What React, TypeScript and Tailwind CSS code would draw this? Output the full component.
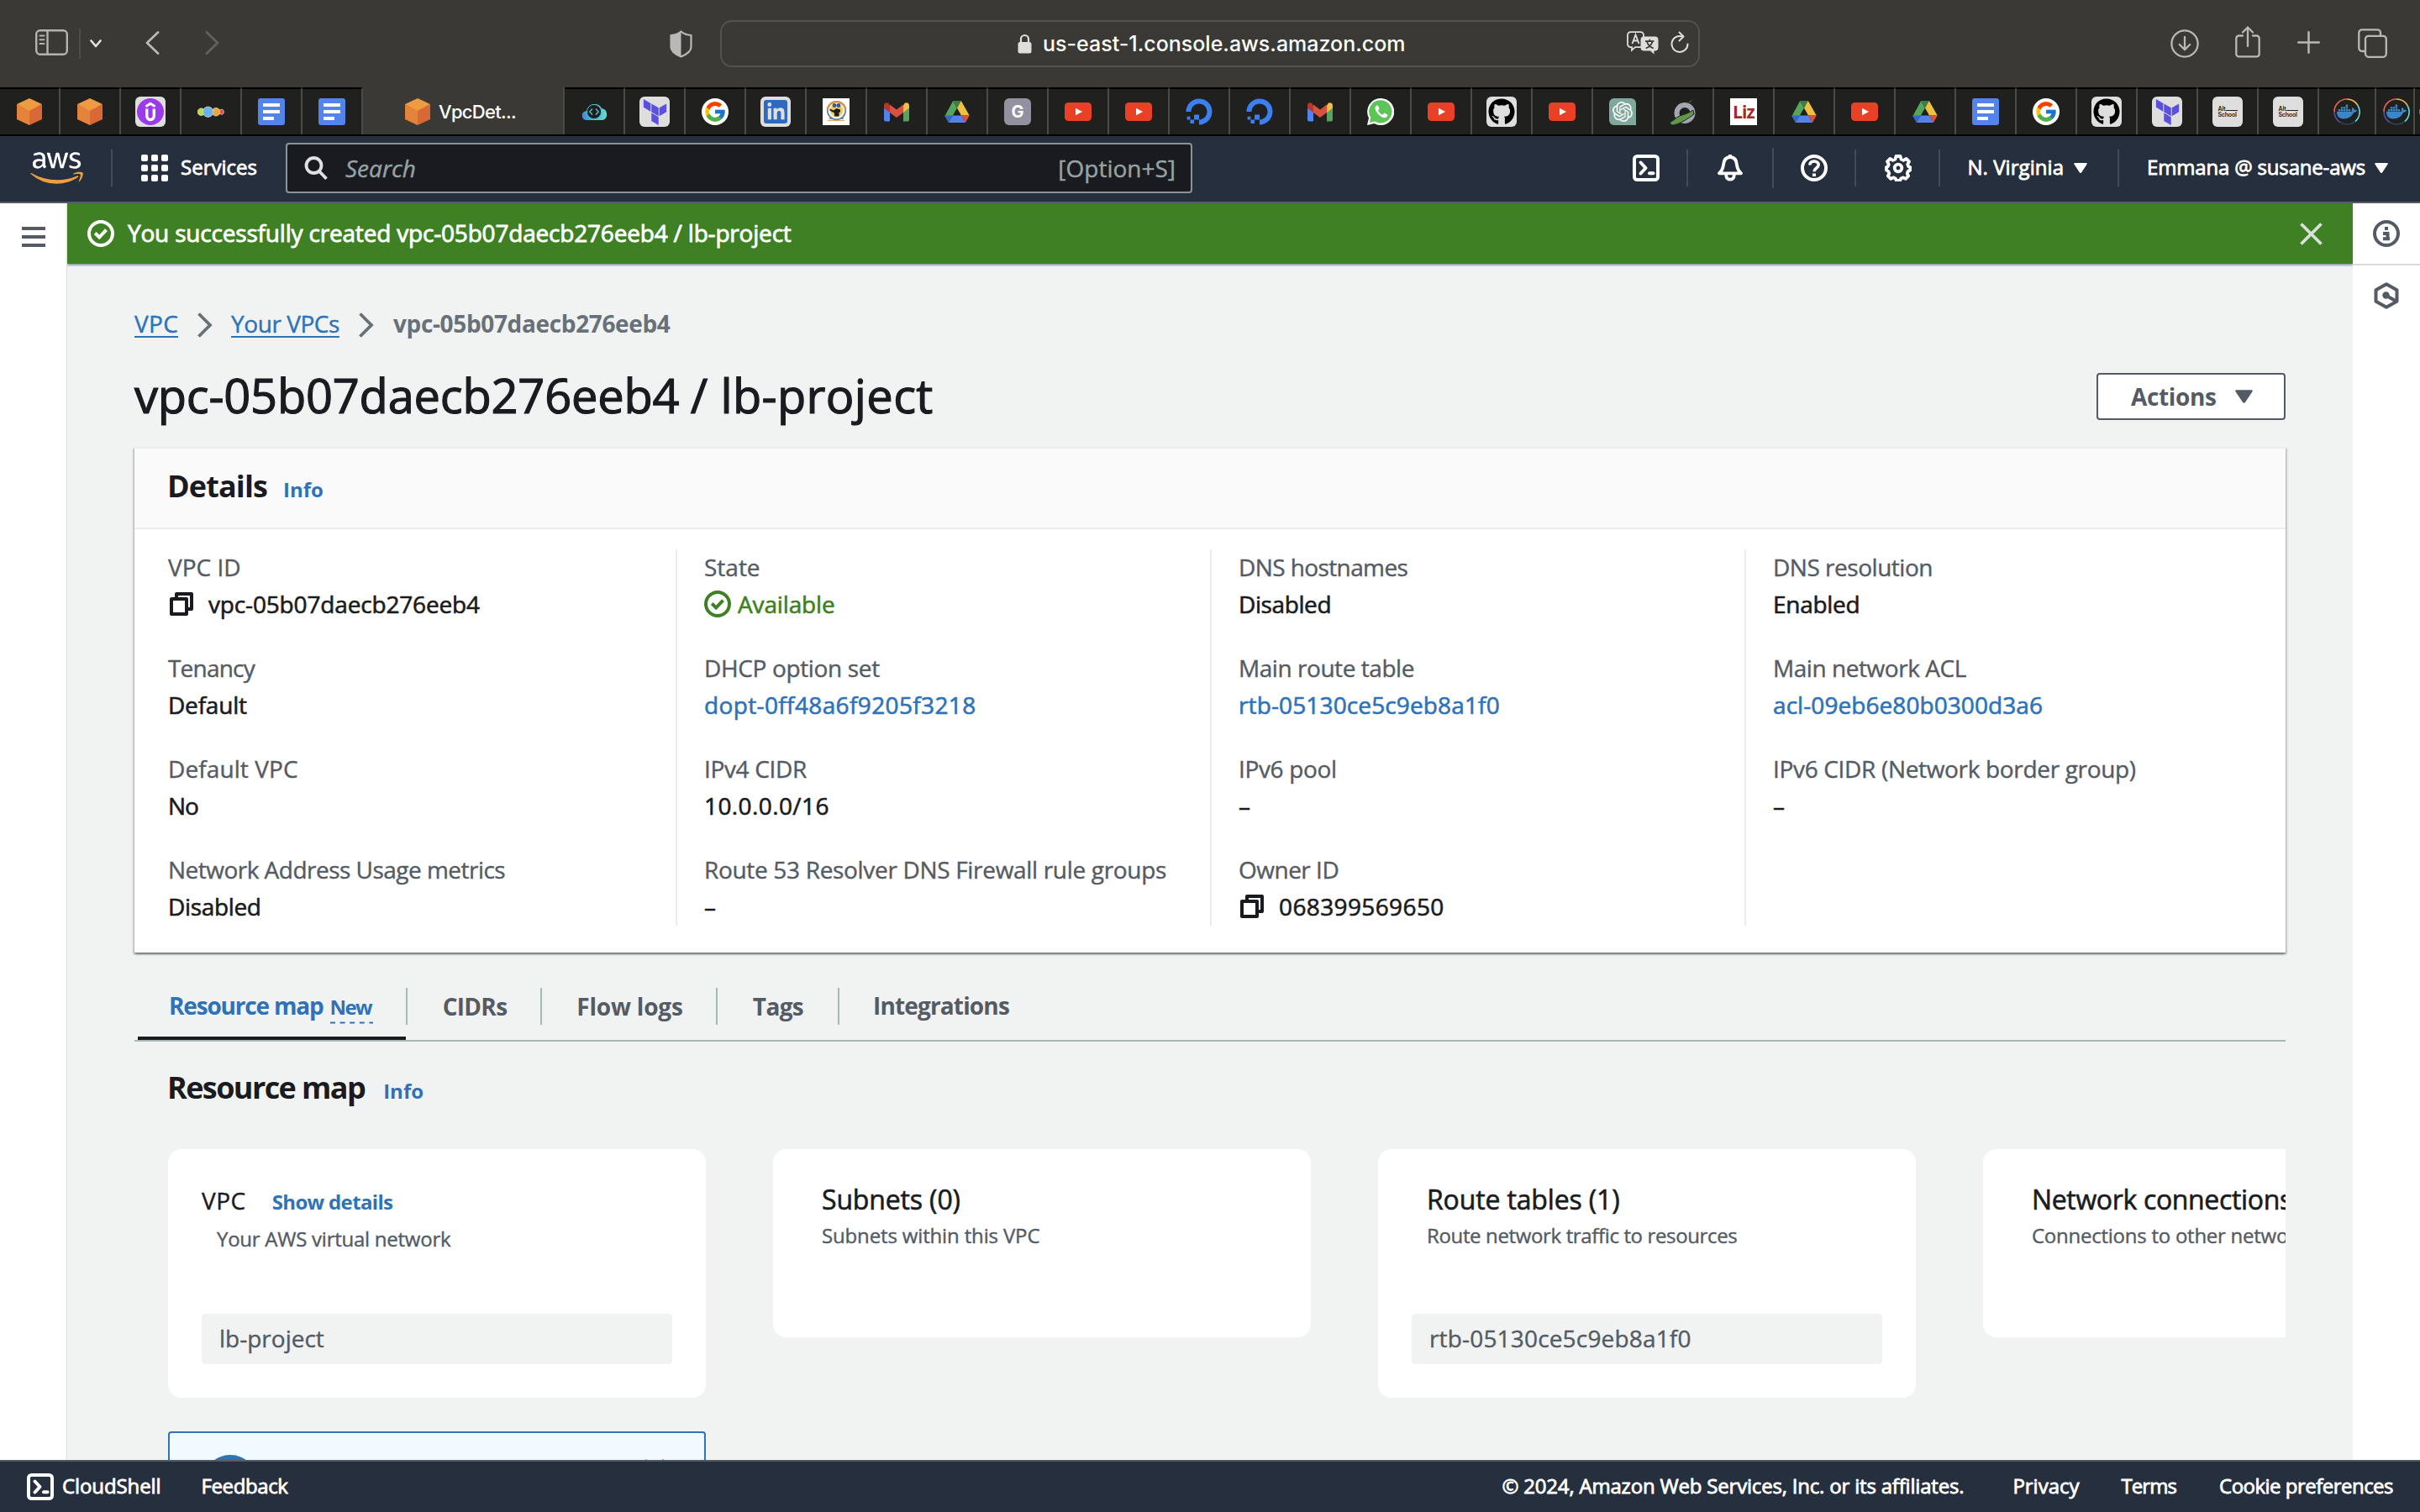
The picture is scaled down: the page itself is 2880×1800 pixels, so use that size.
import React from "react";
import { FaAws, FaDigitalOcean, FaDocker, FaGithub, FaLinkedinIn } from "react-icons/fa";
import { FcGoogle } from "react-icons/fc";
import { SiOpenai, SiTerraform } from "react-icons/si";

/* ---------- Browser toolbar icons ---------- */

const SidebarIcon = () => (
  <svg className="h-[31px] w-[39px]" viewBox="0 0 39 31" fill="none" stroke="#b4b3b1" strokeWidth="2.4">
    <rect x="1.2" y="1.2" width="36.6" height="28.6" rx="4.5" />
    <path d="M14.5 1v29" />
    <path d="M5.5 7.5h5M5.5 12.3h5M5.5 17h5" strokeWidth="2" strokeLinecap="round" />
  </svg>
);

const Chevron = ({ dir, color }: { dir: "left" | "right"; color: string }) => (
  <svg className="h-7 w-[17px]" viewBox="0 0 17 28" fill="none" stroke={color} strokeWidth="2.8" strokeLinecap="round" strokeLinejoin="round">
    <path d={dir === "left" ? "M15 1.5L2 14l13 12.5" : "M2 1.5L15 14 2 26.5"} />
  </svg>
);

const ShieldIcon = () => (
  <svg className="h-[33px] w-[27px]" viewBox="0 0 27 33" fill="none">
    <path d="M13.5 1.5C10 4.5 6 5.8 1.5 6v14c0 6 7.5 9.6 12 11.5 4.5-1.9 12-5.5 12-11.5V6c-4.500-.2-8.500-1.500-12-4.500z" stroke="#b9b8b6" strokeWidth="2.2" strokeLinejoin="round" />
    <path d="M13.5 1.5C10 4.5 6 5.8 1.5 6v14c0 6 7.5 9.6 12 11.5z" fill="#b9b8b6" />
  </svg>
);

const LockIcon = () => (
  <svg className="h-[24px] w-[17px]" viewBox="0 0 17 24">
    <path d="M4 11V6.500a4.500 4.500 0 0 1 9 0V11" fill="none" stroke="#dededd" strokeWidth="2.2" />
    <rect x="0.5" y="10" width="16" height="13.5" rx="2.5" fill="#dededd" />
  </svg>
);

const TranslateIcon = () => (
  <svg className="h-[28px] w-[38px]" viewBox="0 0 38 28">
    <path d="M4.500 1.200h12a3.500 3.500 0 0 1 3.500 3.500v11a3.500 3.500 0 0 1-3.500 3.500H10l-4 3.600v-3.600H4.500A3.500 3.500 0 0 1 1 15.700v-11a3.500 3.500 0 0 1 3.500-3.500z" fill="#3a3936" stroke="#dededd" strokeWidth="1.8" />
    <path d="M6.500 15l4-10.500 4 10.500M8 11.500h5" fill="none" stroke="#dededd" strokeWidth="1.9" />
    <path d="M20.500 6.500h13a4 4 0 0 1 4 4v9a4 4 0 0 1-4 4h-1v4l-4.500-4h-7.500a4 4 0 0 1-4-4v-9a4 4 0 0 1 4-4z" fill="#dededd" />
    <path d="M22 12.200h10.500M27.200 9.700v2.500M30.500 12.500c-1 3.500-4.500 6.800-7.800 8M24 12.500c1 3.500 4.500 6.800 7.800 8" fill="none" stroke="#3a3936" strokeWidth="1.7" />
  </svg>
);

const ReloadIcon = () => (
  <svg className="h-[27px] w-[22px]" viewBox="0 0 22 27" fill="none" stroke="#dededd" strokeWidth="2" strokeLinecap="round">
    <path d="M14.500 6.600A9.500 9.500 0 1 0 20.500 15.500" />
    <path d="M10.500 1.500l5 5-5 5" strokeLinejoin="round" />
  </svg>
);

const DownloadIcon = () => (
  <svg className="h-[34px] w-[34px]" viewBox="0 0 34 34" fill="none" stroke="#b9b8b6" strokeWidth="2.3" strokeLinecap="round" strokeLinejoin="round">
    <circle cx="17" cy="17" r="15.6" />
    <path d="M17 9v15M10.800 18l6.200 6.300 6.200-6.300" />
  </svg>
);

const ShareIcon = () => (
  <svg className="h-[38px] w-[30px]" viewBox="0 0 30 38" fill="none" stroke="#b9b8b6" strokeWidth="2.3" strokeLinecap="round" strokeLinejoin="round">
    <path d="M9 11.500H4.500A3.200 3.200 0 0 0 1.300 14.700v18.500a3.200 3.200 0 0 0 3.200 3.200h21a3.200 3.200 0 0 0 3.200-3.200V14.700a3.200 3.200 0 0 0-3.200-3.200H21" />
    <path d="M15 24V1.500M9 7.500l6-6 6 6" />
  </svg>
);

const PlusIcon = () => (
  <svg className="h-[27px] w-[27px]" viewBox="0 0 27 27" stroke="#b9b8b6" strokeWidth="2.5" strokeLinecap="round">
    <path d="M13.500 1.300v24.400M1.300 13.500h24.400" />
  </svg>
);

const TabsIcon = () => (
  <svg className="h-[35px] w-[35px]" viewBox="0 0 35 35" fill="none" stroke="#b9b8b6" strokeWidth="2.3">
    <path d="M27 8.500V5a3.700 3.700 0 0 0-3.700-3.700H5A3.700 3.700 0 0 0 1.300 5v18.300A3.700 3.700 0 0 0 5 27h4" />
    <rect x="9" y="8.8" width="24.8" height="25" rx="3.7" />
  </svg>
);

/* ---------- Favicons ---------- */

const Cube = () => (
  <svg className="h-8 w-8" viewBox="0 0 32 32">
    <path d="M16 0l15 7-15 9L1 7z" fill="#ee9b42" />
    <path d="M1 7l15 8v17L1 25z" fill="#e4843c" />
    <path d="M31 7l-15 8v17l15-7z" fill="#d86836" />
  </svg>
);

const Tile = ({ children }: { children: React.ReactNode }) => (
  <div className="flex h-9 w-9 items-center justify-center rounded-md bg-[#dedede]">{children}</div>
);

const Udemy = () => (
  <Tile>
    <svg className="h-8 w-8" viewBox="0 0 32 32" fill="none" stroke="#fff" strokeWidth="3.4">
      <circle cx="16" cy="16" r="16" fill="#9a3ae8" stroke="none" />
      <path d="M10.500 9.800L16 6.300l5.500 3.500" strokeWidth="3" />
      <path d="M11.700 12.500v8c0 3 1.700 5 4.300 5s4.300-2 4.300-5v-8" />
    </svg>
  </Tile>
);

const Dots = () => (
  <svg className="h-8 w-8" viewBox="0 0 32 32" stroke="#e9e4d8" strokeWidth="0.7">
    <circle cx="28.5" cy="16.2" r="3" fill="#e04b35" />
    <circle cx="4.5" cy="16.2" r="4.3" fill="#b6dc3f" />
    <circle cx="22" cy="16.2" r="4.8" fill="#eda53a" />
    <circle cx="12.6" cy="16.2" r="6.2" fill="#6ab1e8" />
  </svg>
);

const Docs = () => (
  <svg className="h-8 w-8" viewBox="0 0 32 32">
    <rect width="32" height="32" rx="3" fill="#5384ec" />
    <path d="M6 6h20v4H6zM6 14h20v4H6zM6 22h13v4H6z" fill="#fff" />
  </svg>
);

const CloudCode = () => (
  <svg className="h-[21px] w-[31px]" viewBox="0 0 31 21">
    <defs>
      <linearGradient id="cloudGrad" x1="0" x2="1">
        <stop offset="0" stopColor="#3f8fdc" />
        <stop offset="1" stopColor="#63ddd0" />
      </linearGradient>
    </defs>
    <path d="M5.500 20A5.500 5.500 0 0 1 5 9.200L7 9a9 9 0 0 1 17-3 7.200 7.200 0 0 1 1 14z" fill="url(#cloudGrad)" />
    <circle cx="15" cy="10" r="8.6" fill="#1f1f1d" stroke="#4fb9cf" strokeWidth="1" />
    <path d="M13 6.500L9.800 10l3.200 3.500M17 6.500l3.200 3.500-3.200 3.500" fill="none" stroke="#4fb9cf" strokeWidth="1.5" />
  </svg>
);

const Terraform = () => (
  <Tile>
    <SiTerraform className="h-[31px] w-[31px] text-[#5b4fe0]" />
  </Tile>
);

const Google = () => (
  <div className="flex h-8 w-8 items-center justify-center rounded-full bg-white">
    <FcGoogle className="h-[28px] w-[28px]" />
  </div>
);

const LinkedIn = () => (
  <Tile>
    <div className="flex h-7 w-7 items-center justify-center rounded-[3px] bg-[#2f69bf]">
      <FaLinkedinIn className="h-[23px] w-[23px] text-[#dedede]" />
    </div>
  </Tile>
);

const Badge = () => (
  <svg className="h-8 w-8" viewBox="0 0 32 32">
    <rect width="32" height="32" fill="#fff" />
    <circle cx="16.5" cy="14.5" r="10.8" fill="#f7f4ea" stroke="#5a7aa8" strokeWidth="1.5" />
    <path d="M5.700 13a11 11 0 0 1 21.600 0" fill="none" stroke="#e38b3b" strokeWidth="2.2" />
    <circle cx="16.5" cy="14.5" r="7.6" fill="#f0c95b" />
    <circle cx="14" cy="8.5" r="2.4" fill="#355c8c" />
    <circle cx="19" cy="8.5" r="2.4" fill="#355c8c" />
    <path d="M8.500 12.500l4.500 2 3.500-2.500 4.500 1.500v3h-1.500v5h-5.500v-4l-5.500-3z" fill="#1c1c1c" />
    <path d="M8 24h4M21 24h4" stroke="#5a7aa8" strokeWidth="1.3" />
    <path d="M6 26.500h20" stroke="#e8a85e" strokeWidth="1.3" />
  </svg>
);

const Gmail = () => (
  <svg className="h-[23px] w-[30px]" viewBox="0 0 30 23">
    <path d="M0 3.500V20.500A2 2 0 0 0 2 22.500H7V10z" fill="#5384ec" />
    <path d="M30 3.500V20.500A2 2 0 0 1 28 22.500H23V10z" fill="#55a65c" />
    <path d="M23 4v8l7-5.200V3.500C30 .5 26.500-.5 24.500 1z" fill="#f1bf42" />
    <path d="M0 3.500v3.300L7 12V4L5.500 1C3.500-.5 0 .5 0 3.500z" fill="#b8362a" />
    <path d="M7 12V2.500l8 6 8-6V12l-8 6z" fill="#d85140" />
  </svg>
);

const Drive = () => (
  <svg className="h-[26px] w-[30px]" viewBox="0 0 30 26">
    <path d="M10.200 0L15 8.500 5 26 .5 18z" fill="#55a65c" />
    <path d="M10.200 0h9.600L15 8.500z" fill="#3d7f42" />
    <path d="M19.800 0L29.700 17.500H20L15 8.500z" fill="#f1bf42" />
    <path d="M5 26l5-8.500h10L25 26z" fill="#5384ec" />
    <path d="M0 17.500h10L5 26z" fill="#3566c8" />
    <path d="M20 17.500h9.800L25 26z" fill="#d85140" />
  </svg>
);

const GTile = () => (
  <div className="flex h-8 w-8 items-center justify-center rounded-md bg-[#93919f] font-['Inter',sans-serif] text-[20px] font-bold text-white">G</div>
);

const YouTube = () => (
  <svg className="h-[22px] w-8" viewBox="0 0 32 22">
    <rect width="32" height="22" rx="4.5" fill="#ea4025" />
    <path d="M13 6.800l8 4.200-8 4.200z" fill="#fff" />
  </svg>
);

const DigitalOcean = () => <FaDigitalOcean className="h-8 w-8 text-[#3b7ff0]" />;

const WhatsApp = () => (
  <svg className="h-8 w-8" viewBox="0 0 32 32">
    <path d="M16 0a16 16 0 1 1-7.500 30L0 32l2-8.500A16 16 0 0 1 16 0z" fill="#fff" />
    <path d="M16 2.300a13.600 13.600 0 1 1-7 25.300L2.800 29l1.500-5.900A13.600 13.600 0 0 1 16 2.300z" fill="#5bc556" />
    <path d="M11.500 8.500c-2.500 1.500-2.500 4.500-.5 7.500 2.500 4 5.500 6.500 9.500 7.300 2.500.2 4-1.800 3.800-3.800l-3.800-2-2.200 2.200c-2.500-1-4.300-3-5.300-5.200l1.500-1.800-1.500-4.200z" fill="#fff" />
  </svg>
);

const GitHub = () => (
  <Tile>
    <FaGithub className="h-[32px] w-[32px] text-black" />
  </Tile>
);

const ChatGPT = () => (
  <div className="flex h-8 w-8 items-center justify-center rounded-[6px] rounded-br-none bg-[#80a79b]">
    <SiOpenai className="h-6 w-6 text-white" />
  </div>
);

const Leaf = () => (
  <svg className="h-8 w-8" viewBox="0 0 32 32">
    <circle cx="18" cy="17.5" r="9.5" fill="none" stroke="#a1a6b0" strokeWidth="6" />
    <path d="M1 28c4-1 6-5 11-7 6-2 10-3 16-7l1 5C22 24 12 31 4 32c-3 0-4-3-3-4z" fill="#60974a" stroke="#20201e" strokeWidth="1" />
    <path d="M22 5l6-4-4 4z" fill="#4a8038" />
  </svg>
);

const Liz = () => (
  <div className="flex h-8 w-8 items-center justify-center bg-white font-['Open_Sans',sans-serif] text-[21px] font-bold leading-8 tracking-[-0.8px] text-[#a32a2c] [-webkit-text-stroke:0px]">Liz</div>
);

const AltSchool = () => (
  <Tile>
    <div className="w-[23px] font-['Inter',sans-serif] text-[7px] leading-[7px] font-semibold tracking-[-0.2px] text-[#222] [-webkit-text-stroke:0px]">
      <div className="flex h-[7px] items-end gap-px">
        <span>Alt</span>
        <span className="mb-px h-px flex-1 bg-[#222]" />
      </div>
      <div className="h-[7px]">School</div>
    </div>
  </Tile>
);

const Docker = () => (
  <div className="relative flex h-8 w-8 items-center justify-center">
    <svg className="absolute inset-0 h-8 w-8" viewBox="0 0 32 32" fill="none" strokeWidth="1.7">
      <path d="M16 1a15 15 0 0 1 13 7.500" stroke="#f2b35a" />
      <path d="M29 8.500a15 15 0 0 1-3 19" stroke="#5fd6cf" />
      <path d="M26 27.500a15 15 0 0 1-18 1" stroke="#2a4257" />
      <path d="M8 28.500a15 15 0 0 1-7-12.500" stroke="#5b4a9a" />
      <path d="M1 16A15 15 0 0 1 16 1" stroke="#e8605a" />
    </svg>
    <FaDocker className="h-[24px] w-[24px] text-[#3987c9]" />
  </div>
);

const leftTabs = [Cube, Cube, Udemy, Dots, Docs, Docs];
const rightTabs = [
  CloudCode, Terraform, Google, LinkedIn, Badge, Gmail, Drive, GTile, YouTube, YouTube, DigitalOcean, DigitalOcean,
  Gmail, WhatsApp, YouTube, GitHub, YouTube, ChatGPT, Leaf, Liz, Drive, YouTube, Drive, Docs, Google, GitHub,
  Terraform, AltSchool, AltSchool,
];

const Tab = ({ icon: Icon, width = "w-[72px]" }: { icon: () => React.ReactElement; width?: string }) => (
  <div className={`flex h-full shrink-0 items-center justify-center border-t-2 border-r-2 border-t-black border-r-[#4a4a48] bg-[#20201e] ${width}`}>
    <Icon />
  </div>
);

function BrowserChrome() {
  return (
    <div className="bg-[#3a3936]">
      <div className="flex h-[104px] items-center pl-[42px]">
        <div className="pb-[3px]"><SidebarIcon /></div>
        <div className="ml-[13px] h-9 w-0.5 bg-[#4e4d4a]" />
        <svg className="ml-[11px] h-2.5 w-3.5" viewBox="0 0 14 10" fill="none" stroke="#e4e3e2" strokeWidth="2.6" strokeLinecap="round" strokeLinejoin="round">
          <path d="M1.500 1.500L7 8l5.500-6.500" />
        </svg>
        <div className="ml-[52px] pb-[2px]"><Chevron dir="left" color="#b9b8b6" /></div>
        <div className="ml-[54px] pb-[2px]"><Chevron dir="right" color="#62615e" /></div>
        <div className="ml-[536px]"><ShieldIcon /></div>
        <div className="ml-[33px] flex h-14 w-[1166px] items-center rounded-[14px] border-2 border-[#53524f] pr-[11px] pl-[352px]">
          <LockIcon />
          <span className="ml-[13px] pt-px font-['Inter',sans-serif] text-[25px] font-medium text-white">us-east-1.console.aws.amazon.com</span>
          <div className="ml-auto flex items-center gap-[14px] pb-[3px]">
            <TranslateIcon />
            <ReloadIcon />
          </div>
        </div>
        <div className="ml-[560px]"><DownloadIcon /></div>
        <div className="ml-[43px] pb-[5px]"><ShareIcon /></div>
        <div className="ml-[44px] pb-[3px]"><PlusIcon /></div>
        <div className="ml-[45px] pb-px"><TabsIcon /></div>
      </div>
      <div className="flex h-[58px] overflow-hidden border-b-2 border-black">
        {leftTabs.map((icon, i) => <Tab key={i} icon={icon} />)}
        <div className="flex h-full w-60 shrink-0 items-center border-r-2 border-[#4a4a48] pt-0.5 pl-[49px]">
          <Cube />
          <span className="ml-[9px] font-['Inter',sans-serif] text-[22px] font-medium tracking-[-0.7px] text-white">VpcDet...</span>
        </div>
        {rightTabs.map((icon, i) => <Tab key={i} icon={icon} />)}
        <Tab icon={Docker} width="w-[68px]" />
        <Tab icon={Docker} width="w-[46px] pl-[3px]" />
        <div className="flex h-full flex-1 items-center justify-end border-t-2 border-black bg-[#20201e]">
          <div className="h-1.5 w-px bg-[#2f8f7d]" />
        </div>
      </div>
    </div>
  );
}

/* ---------- Console icons ---------- */

const ShellIcon = () => (
  <svg className="h-8 w-8" viewBox="0 0 32 32" fill="none" stroke="#fff" strokeWidth="4" strokeLinejoin="round">
    <rect x="2" y="2" width="28" height="28" rx="3.5" />
    <path d="M9.500 9.500l6 6.500-6 6.500" strokeLinecap="round" />
    <path d="M20 22.200h4.500" strokeLinecap="round" />
  </svg>
);

const BellIcon = () => (
  <svg className="h-8 w-8" viewBox="0 0 32 32" fill="none" stroke="#fff" strokeWidth="3.8" strokeLinejoin="round">
    <path d="M3 22.300h26c-4-3.500-4.500-6-5-10C23.500 6.300 20.500 3 16 3s-7.500 3.300-8 9.300c-.5 4-1 6.500-5 10z" />
    <path d="M11.300 23v2a4.700 4.700 0 0 0 9.400 0v-2" />
    <path d="M16 0v3" />
  </svg>
);

const HelpIcon = () => (
  <svg className="h-8 w-8" viewBox="0 0 32 32" fill="none" stroke="#fff" strokeWidth="4">
    <circle cx="16" cy="16" r="14" />
    <path d="M10.800 12.500C11 9.500 13.200 8 16 8c3 0 5.200 1.700 5.200 4.300 0 3.700-5.200 3.700-5.200 8" strokeWidth="3.6" />
    <path d="M16 22.500v3.500" />
  </svg>
);

const GearIcon = () => (
  <svg className="h-8 w-8" viewBox="0 0 32 32" fill="none" stroke="#fff" strokeLinejoin="round">
    <path
      d="M13.500 2h5l1 3.600 2.800 1.200 3.300-1.900 3.400 3.500-1.800 3.300 1.100 2.600 1.900.7v3.500l-2.500 1.500-1 2.700 1.500 2.800-3.400 3.400-2.900-1.600-2.700 1.100-1 2.600h-4.400l-1-2.600-2.700-1.100-2.900 1.600-3.400-3.400 1.500-2.800-1-2.700L2 18.500V15l1.700-.7 1.100-2.600L3 8.400l3.400-3.500 3.300 1.900 2.800-1.200z"
      strokeWidth="3.8"
    />
    <circle cx="16" cy="16" r="4.3" strokeWidth="3.8" />
  </svg>
);

const Caret = ({ className }: { className: string }) => (
  <svg className={className} viewBox="0 0 16 12">
    <path d="M1.200 0h13.600c1 0 1.300.8.8 1.600L9.200 11.200a1.400 1.400 0 0 1-2.400 0L.4 1.600C-.1.800.2 0 1.200 0z" fill="currentColor" />
  </svg>
);

const CheckCircle = ({ className }: { className: string }) => (
  <svg className={`h-8 w-8 shrink-0 ${className}`} viewBox="0 0 32 32" fill="none" stroke="currentColor" strokeWidth="4">
    <circle cx="16" cy="16" r="14" />
    <path d="M9.200 15.500l5 5 8.300-8.800" />
  </svg>
);

const CopyIcon = () => (
  <svg className="h-8 w-8 shrink-0" viewBox="0 0 32 32" fill="none" stroke="#1a1b20" strokeWidth="4" strokeLinejoin="round">
    <path d="M4 10h18v18H4z" />
    <path d="M10 10V4h18v18h-6" />
  </svg>
);

const Divider = ({ className }: { className: string }) => <div className={`w-0.5 shrink-0 bg-[#424b59] ${className}`} />;

function ConsoleHeader() {
  return (
    <div className="flex h-20 items-center border-b-2 border-[#545b64] bg-[#262f3e] pr-[38px] pb-[2px] text-[24px] leading-8 text-white [-webkit-text-stroke:0.8px]">
      <div className="flex w-[340px] items-center pl-[36px]">
        <div className="relative h-[50px] w-[63px]">
          <FaAws className="absolute inset-0 h-[50px] w-[63px] text-white [clip-path:inset(0_0_44%_0)]" />
          <FaAws className="absolute inset-0 h-[50px] w-[63px] text-[#ec9f3f] [clip-path:inset(56%_0_0_0)]" />
        </div>
        <Divider className="ml-[33px] h-11" />
        <div className="ml-[34px] grid h-8 w-8 grid-cols-3 gap-1">
          {Array.from({ length: 9 }, (_, i) => <div key={i} className="rounded-[2px] bg-white" />)}
        </div>
        <span className="ml-[15px] pb-[2px]">Services</span>
      </div>
      <div className="flex h-[60px] w-[1079px] items-center rounded-[4px] border-2 border-[#8a9696] bg-[#1a1b20] pr-[18px] pl-[20px] text-[28px] text-[#97a3a3] [-webkit-text-stroke:0.4px]">
        <svg className="h-7 w-7" viewBox="0 0 28 28" fill="none" stroke="#dde1e1" strokeWidth="3.8">
          <circle cx="11.5" cy="11" r="9" />
          <path d="M18 18l8.500 8.800" />
        </svg>
        <span className="ml-[21px] italic">Search</span>
        <span className="ml-auto">[Option+S]</span>
      </div>
      <div className="ml-auto flex items-center">
        <ShellIcon />
        <Divider className="ml-[32px] h-11" />
        <div className="ml-[34px]"><BellIcon /></div>
        <Divider className="ml-[34px] h-12" />
        <div className="ml-[32px]"><HelpIcon /></div>
        <Divider className="ml-[32px] h-11" />
        <div className="ml-[34px]"><GearIcon /></div>
        <Divider className="ml-[32px] h-11" />
        <span className="ml-[33px] pb-[2px] tracking-[0.05px]">N. Virginia</span>
        <Caret className="ml-[12px] h-3 w-4" />
        <Divider className="ml-[36px] h-11" />
        <span className="ml-[33px] pb-[2px] tracking-[-0.18px]">Emmana @ susane-aws</span>
        <Caret className="ml-[11px] h-3 w-4" />
      </div>
    </div>
  );
}

/* ---------- VPC details ---------- */

type Field = { label: string; lt?: string; value: string; vt?: string; kind?: "link" | "copy" | "ok" };

const columns: { box: string; fields: Field[] }[] = [
  {
    box: "w-[644px] pl-[40px]",
    fields: [
      { label: "VPC ID", value: "vpc-05b07daecb276eeb4", vt: "tracking-[-0.16px]", kind: "copy" },
      { label: "Tenancy", lt: "tracking-[-0.8px]", value: "Default", vt: "tracking-[-0.2px]" },
      { label: "Default VPC", lt: "tracking-[0.1px]", value: "No", vt: "tracking-[-1px]" },
      { label: "Network Address Usage metrics", lt: "tracking-[-0.52px]", value: "Disabled", vt: "tracking-[-0.35px]" },
    ],
  },
  {
    box: "w-[636px] border-l-2 border-[#eaeded] pl-[32px]",
    fields: [
      { label: "State", value: "Available", vt: "tracking-[-0.14px]", kind: "ok" },
      { label: "DHCP option set", lt: "tracking-[-0.35px]", value: "dopt-0ff48a6f9205f3218", vt: "tracking-[0.37px]", kind: "link" },
      { label: "IPv4 CIDR", lt: "tracking-[-0.35px]", value: "10.0.0.0/16", vt: "tracking-[0.4px]" },
      { label: "Route 53 Resolver DNS Firewall rule groups", lt: "tracking-[-0.32px]", value: "–" },
    ],
  },
  {
    box: "w-[636px] border-l-2 border-[#eaeded] pl-[32px]",
    fields: [
      { label: "DNS hostnames", lt: "tracking-[-0.6px]", value: "Disabled", vt: "tracking-[-0.4px]" },
      { label: "Main route table", lt: "tracking-[-0.45px]", value: "rtb-05130ce5c9eb8a1f0", vt: "tracking-[0.13px]", kind: "link" },
      { label: "IPv6 pool", lt: "tracking-[-0.35px]", value: "–" },
      { label: "Owner ID", lt: "tracking-[-0.5px]", value: "068399569650", vt: "tracking-[0.38px]", kind: "copy" },
    ],
  },
  {
    box: "w-[644px] border-l-2 border-[#eaeded] pl-[32px]",
    fields: [
      { label: "DNS resolution", lt: "tracking-[-0.48px]", value: "Enabled", vt: "tracking-[-0.3px]" },
      { label: "Main network ACL", lt: "tracking-[-0.45px]", value: "acl-09eb6e80b0300d3a6", vt: "tracking-[0.07px]", kind: "link" },
      { label: "IPv6 CIDR (Network border group)", lt: "tracking-[-0.33px]", value: "–" },
    ],
  },
];

function FieldItem({ label, lt = "", value, vt = "", kind }: Field) {
  const color = kind === "link" ? "text-[#2e72b8]" : kind === "ok" ? "text-[#3e8023]" : "text-[#1a1b20]";
  return (
    <div className="h-[88px] whitespace-nowrap">
      <div className={`leading-[42px] text-[#545b64] ${lt}`}>{label}</div>
      <div className={`flex items-center leading-[46px] [-webkit-text-stroke:0.6px] ${color} ${vt}`}>
        {kind === "ok" && <CheckCircle className="mr-[8px]" />}
        {kind === "copy" && <span className="mr-[16px]"><CopyIcon /></span>}
        {value}
      </div>
    </div>
  );
}

const bold = "font-bold [-webkit-text-stroke:0px]";

function DetailsCard() {
  return (
    <div className="mt-[26px] border-t-2 border-[#eaeded] bg-white shadow-[0_2px_2px_0_rgba(0,28,36,0.4),2px_2px_2px_0_rgba(0,28,36,0.15),-2px_2px_2px_0_rgba(0,28,36,0.15)]">
      <div className={`flex h-24 items-baseline border-b-2 border-[#eaeded] bg-[#fafafa] pt-[23px] pl-[39px] ${bold}`}>
        <span className="text-[36px] leading-[44px] tracking-[-0.88px]">Details</span>
        <span className="ml-[19px] text-[24px] text-[#2e72b8]">Info</span>
      </div>
      <div className="flex pt-6 pb-8">
        {columns.map((c, i) => (
          <div key={i} className={`flex shrink-0 flex-col gap-8 ${c.box}`}>
            {c.fields.map((f) => <FieldItem key={f.label} {...f} />)}
          </div>
        ))}
      </div>
    </div>
  );
}

function TabBar() {
  const tab = "flex h-11 items-center justify-center border-r-2 border-[#aab7b8]";
  return (
    <div className={`mt-[42px] flex h-16 border-b-2 border-[#aab7b8] pl-[3px] text-[28px] leading-[42px] text-[#545b64] ${bold}`}>
      <div className="flex h-[62px] w-[322px] flex-col justify-between">
        <div className="flex h-11 items-baseline border-r-2 border-[#aab7b8] pl-[38px] text-[#2e72b8]">
          <span className="tracking-[-1.18px]">Resource map</span>
          <span className="ml-[8px] text-[24px] leading-[34px] tracking-[-1.6px]">
            New
            <svg className="h-[3px] w-[51px]" viewBox="0 0 51 3">
              <path d="M0 1.500h51" stroke="#2e72b8" strokeWidth="2" strokeDasharray="6 5.6" />
            </svg>
          </span>
        </div>
        <div className="ml-px mr-0.5 h-1 bg-[#1a1b20]" />
      </div>
      <div className={`w-[160px] pl-[2px] tracking-[-0.7px] ${tab}`}>CIDRs</div>
      <div className={`w-[209px] pl-[2px] tracking-[-0.2px] ${tab}`}>Flow logs</div>
      <div className={`w-[145px] pl-px tracking-[-0.65px] ${tab}`}>Tags</div>
      <div className="pl-[40px] tracking-[-0.85px]">Integrations</div>
    </div>
  );
}

const MapCard = ({ title, tt, sub, st, children }: { title: string; tt: string; sub: string; st: string; children?: React.ReactNode }) => (
  <div className={`w-[640px] shrink-0 rounded-2xl bg-white px-10 pt-[38px] whitespace-nowrap ${children ? "h-[296px]" : "h-[224px]"}`}>
    <div className={`pl-[18px] text-[32px] leading-[44px] [-webkit-text-stroke:0.6px] ${tt}`}>{title}</div>
    <div className={`mt-px pl-[18px] text-[24px] leading-10 text-[#545b64] ${st}`}>{sub}</div>
    {children}
  </div>
);

function ResourceMap() {
  return (
    <div className="mt-8 pl-10">
      <div className={`flex h-11 items-baseline pt-px ${bold}`}>
        <span className="-ml-px text-[36px] leading-[44px] tracking-[-1.59px]">Resource map</span>
        <span className="ml-[22px] text-[24px] text-[#2e72b8]">Info</span>
      </div>
      <div className="mt-[52px] flex items-start gap-20 overflow-hidden">
        <div className="h-[296px] w-[640px] shrink-0 rounded-2xl bg-white px-10 pt-[39px]">
          <div className="flex h-11 items-baseline leading-[44px]">
            <span className="tracking-[0.5px]">VPC</span>
            <span className={`ml-[31px] text-[24px] tracking-[-0.65px] text-[#2e72b8] ${bold}`}>Show details</span>
          </div>
          <div className="mt-1 pl-[18px] text-[24px] leading-10 tracking-[-0.25px] text-[#545b64]">Your AWS virtual network</div>
          <div className="mt-[69px] flex h-[60px] items-center rounded-[4px] bg-[#f1f3f3] pb-0.5 pl-[21px] text-[#545b64]">lb-project</div>
        </div>
        <MapCard title="Subnets (0)" tt="tracking-[-0.15px]" sub="Subnets within this VPC" st="tracking-[-0.15px]" />
        <MapCard title="Route tables (1)" tt="tracking-[-0.15px]" sub="Route network traffic to resources" st="tracking-[-0.36px]">
          <div className="mt-[73px] flex h-[60px] items-center rounded-[4px] bg-[#f1f3f3] pb-0.5 pl-[21px] tracking-[0.17px] text-[#545b64]">rtb-05130ce5c9eb8a1f0</div>
        </MapCard>
        <MapCard title="Network connections" tt="tracking-[-0.35px]" sub="Connections to other networks" st="tracking-[-0.25px]" />
      </div>
      <div className="mt-10 flex h-[180px] w-[640px] justify-between rounded-[4px] border-2 border-[#2e72b8] bg-[#f1faff] pt-[26px] pr-[46px] pl-[40px]">
        <div className="h-16 w-16 rounded-full bg-[#2e72b8]" />
        <svg className="mt-[4px] h-[26px] w-[26px]" viewBox="0 0 26 26" stroke="#545b64" strokeWidth="3">
          <path d="M2 2l22 22M24 2L2 24" />
        </svg>
      </div>
    </div>
  );
}

const CrumbArrow = () => (
  <svg className="h-[30px] w-[18px]" viewBox="0 0 18 30" fill="none" stroke="#687078" strokeWidth="3.8">
    <path d="M1.500 1.500L15 15 1.500 28.500" />
  </svg>
);

function Main() {
  return (
    <div className="flex h-full w-[2720px] shrink-0 flex-col overflow-hidden bg-[#f1f3f3] text-[28px] text-[#1a1b20] shadow-[0_0_2px_0_rgba(0,28,36,0.4)] [-webkit-text-stroke:0.4px]">
      <div className="relative flex h-[72px] shrink-0 items-center bg-[#3e8023] pr-[36px] pl-6 text-white shadow-[0_2px_2px_0_rgba(0,28,36,0.4)]">
        <CheckCircle className="" />
        <span className="ml-[16px] pb-[2px] tracking-[-0.19px] [-webkit-text-stroke:0.8px]">You successfully created vpc-05b07daecb276eeb4 / lb-project</span>
        <svg className="ml-auto h-[27px] w-[27px]" viewBox="0 0 27 27" stroke="#d9e0d9" strokeWidth="3.8">
          <path d="M1.500 1.500l24 24M25.500 1.500l-24 24" />
        </svg>
      </div>
      <div className="px-20">
        <div className="mt-[49px] flex h-11 items-center leading-[44px]">
          <span className="tracking-[0.3px] text-[#2e72b8] underline decoration-2 underline-offset-[4px]">VPC</span>
          <span className="mt-[3px] ml-[23px]"><CrumbArrow /></span>
          <span className="ml-[22px] tracking-[-0.45px] text-[#2e72b8] underline decoration-2 underline-offset-[4px]">Your VPCs</span>
          <span className="mt-[3px] ml-[23px]"><CrumbArrow /></span>
          <span className={`ml-[23px] tracking-[-0.35px] text-[#687078] ${bold}`}>vpc-05b07daecb276eeb4</span>
        </div>
        <div className="mt-[27px] flex h-[72px] items-start justify-between">
          <span className="text-[56px] leading-[72px] tracking-[-0.2px] [-webkit-text-stroke:1.2px]">
            vpc-05b07daecb276eeb4 <span className="-ml-px tracking-[0.35px]">/ lb-project</span>
          </span>
          <div className="mt-[10px] flex h-14 w-[225px] items-center rounded-[4px] border-2 border-[#545b64] bg-white pl-[39px] text-[#545b64]">
            <span className={`tracking-[-0.36px] ${bold}`}>Actions</span>
            <Caret className="ml-[22px] h-4 w-[21px]" />
          </div>
        </div>
        <DetailsCard />
        <TabBar />
        <ResourceMap />
      </div>
    </div>
  );
}

export default function App() {
  return (
    <div className="flex h-[1800px] w-[2880px] flex-col overflow-hidden bg-white font-['Open_Sans','Noto_Sans',sans-serif]">
      <BrowserChrome />
      <ConsoleHeader />
      <div className="flex h-[1496px] overflow-hidden">
        <div className="flex w-20 shrink-0 flex-col items-center gap-[6px] bg-white pt-7">
          <div className="h-1 w-7 bg-[#545b64]" />
          <div className="h-1 w-7 bg-[#545b64]" />
          <div className="h-1 w-7 bg-[#545b64]" />
        </div>
        <Main />
        <div className="w-20 shrink-0 bg-white">
          <div className="flex h-[74px] items-center justify-center border-b-2 border-[#d5dbdb]">
            <svg className="h-8 w-8" viewBox="0 0 32 32" fill="none" stroke="#545b64">
              <circle cx="16" cy="16" r="14" strokeWidth="4" />
              <path d="M14 10h4M12 16h5.500v6M12 22.200h8" strokeWidth="4" />
            </svg>
          </div>
          <div className="flex justify-center pt-5">
            <svg className="h-8 w-[30px]" viewBox="0 0 30 32" fill="none" stroke="#545b64" strokeWidth="4" strokeLinejoin="round">
              <path d="M15 2.300l12.500 6.900v13.600L15 29.700 2.500 22.800V9.200z" />
              <path d="M15 16l11.500 6.500" />
              <circle cx="14.5" cy="15.5" r="4.2" fill="#545b64" stroke="none" />
            </svg>
          </div>
        </div>
      </div>
      <div className="flex h-[62px] items-center border-t-2 border-[#545b64] bg-[#262f3e] pr-8 pl-8 text-[24px] leading-8 whitespace-nowrap text-white [-webkit-text-stroke:0.8px]">
        <ShellIcon />
        <span className="ml-[10px] pb-[3px] tracking-[-0.1px]">CloudShell</span>
        <span className="ml-[48px] pb-[2px] tracking-[-0.4px]">Feedback</span>
        <span className="ml-auto pb-[2px] tracking-[-0.19px]">© 2024, Amazon Web Services, Inc. or its affiliates.</span>
        <span className="ml-[58px] pb-[2px]">Privacy</span>
        <span className="ml-[50px] pb-[2px] tracking-[-0.93px]">Terms</span>
        <span className="ml-[51px] pb-[2px] tracking-[-0.52px]">Cookie preferences</span>
      </div>
    </div>
  );
}
